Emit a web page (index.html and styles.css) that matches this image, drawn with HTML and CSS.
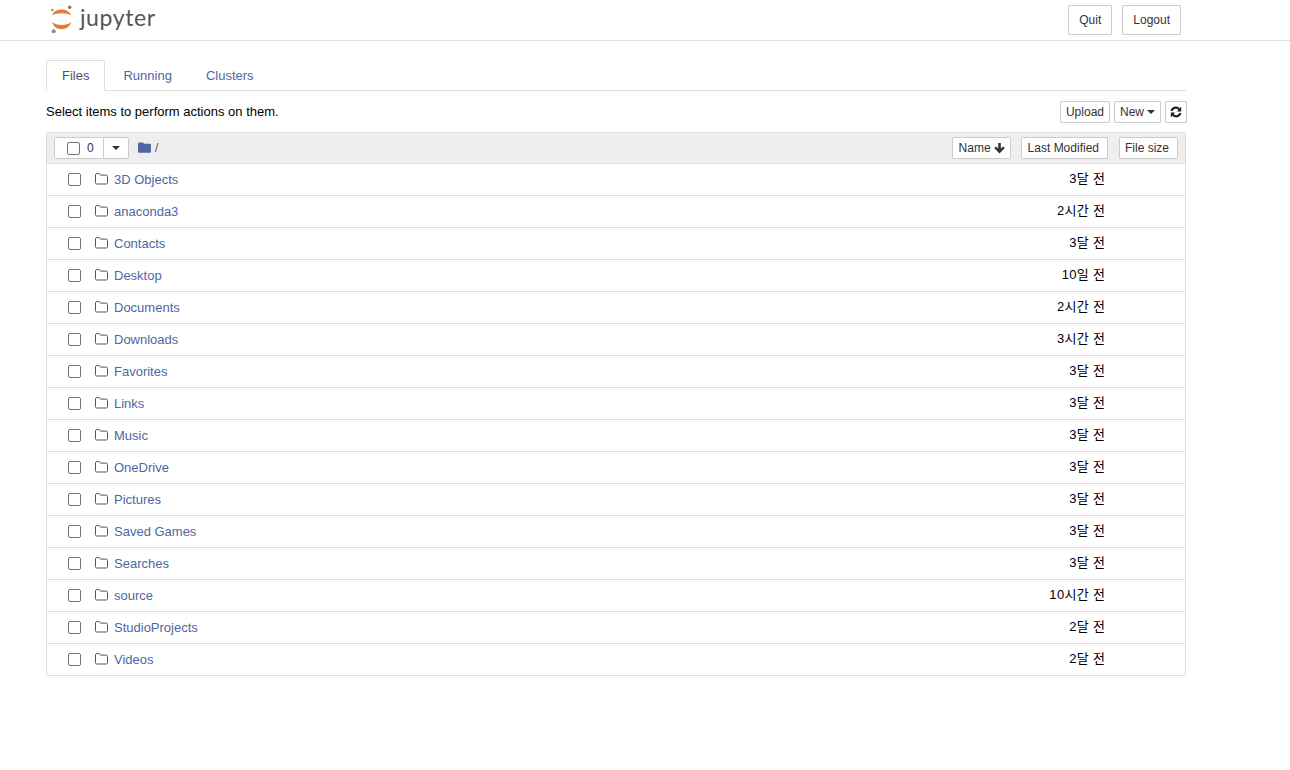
FILE: index.html
```html
<!DOCTYPE html>
<html lang="en">
<head>
<meta charset="utf-8">
<title>Home</title>
<link rel="stylesheet" href="styles.css">
</head>
<body>
<svg class="defs" width="0" height="0" aria-hidden="true">
  <symbol id="folder" viewBox="0 0 13 12"><path d="M.5 9.8V1.7C.5 1.1 1 .6 1.6.6H4.2C4.8.6 5.2 1 5.5 2.1H11.3C12 2.1 12.5 2.6 12.5 3.3V9.8C12.5 10.5 12 11 11.3 11H1.7C1 11 .5 10.5.5 9.8Z" fill="none" stroke="#555" stroke-width="1"/></symbol>
</svg>
<header class="header">
  <div class="header-inner">
    <a class="logo">
      <svg class="logo-mark" width="24" height="30" viewBox="0 0 24 30">
        <path d="M2 12.5C5 4.6 18 4.6 21.2 12.5C17.5 9.4 6 9.4 2 12.5Z" fill="#e07b39"/>
        <path d="M2 19C5 28.6 18 28.6 21.2 19C17.5 23 6 23 2 19Z" fill="#e07b39"/>
        <circle cx="19.7" cy="4.3" r="1.7" fill="#767677"/>
        <circle cx="2.3" cy="7" r="1.2" fill="#8a8a8a"/>
        <circle cx="3.7" cy="28.3" r="2" fill="#8a8a8a"/>
      </svg>
      <span class="logo-text">jupyter</span>
    </a>
    <div class="header-btns">
      <button class="btn btn-header">Quit</button>
      <button class="btn btn-header">Logout</button>
    </div>
  </div>
</header>
<main class="main">
  <nav class="tabs">
    <a class="tab active">Files</a>
    <a class="tab">Running</a>
    <a class="tab">Clusters</a>
  </nav>
  <div class="toolbar">
    <span class="hint">Select items to perform actions on them.</span>
    <div class="toolbar-btns">
      <button class="btn btn-xs">Upload</button>
      <button class="btn btn-xs">New <i class="caret"></i></button>
      <button class="btn btn-xs btn-refresh" aria-label="Refresh">
        <svg width="12" height="12" viewBox="0 0 12 12"><path d="M.6 5C1 2.4 3.2.6 5.8.6C7.3.6 8.6 1.2 9.6 2.2L11.2.8V5.4H6.8L8.3 3.9C7.7 3.2 6.9 2.8 5.9 2.8C4.4 2.8 3.2 3.7 2.8 5H.6ZM11.4 7C11 9.6 8.8 11.4 6.2 11.4C4.7 11.4 3.4 10.8 2.4 9.8L.8 11.2V6.6H5.2L3.7 8.1C4.3 8.8 5.1 9.2 6.1 9.2C7.6 9.2 8.8 8.3 9.2 7H11.4Z" fill="#222"/></svg>
      </button>
    </div>
  </div>
  <section class="list">
    <div class="list-head">
      <div class="select-group">
        <label class="select-count"><input type="checkbox" class="check head-check"><span>0</span></label>
        <span class="select-drop"><i class="caret dark"></i></span>
      </div>
      <svg class="crumb-icon" width="13" height="11" viewBox="0 0 13 11"><path d="M0 2C0 1 .6.5 1.4.5H4.4C5.2.5 5.6 1 5.8 1.8H11.6C12.4 1.8 13 2.4 13 3.2V9.4C13 10.2 12.4 10.8 11.6 10.8H1.4C.6 10.8 0 10.2 0 9.4Z" fill="#4f66a4"/></svg>
      <span class="crumb-sep">/</span>
      <div class="sort-btns">
        <button class="btn btn-sort sort-name">Name
          <svg width="11" height="11" viewBox="0 0 11 11"><path d="M4.2 0H6.8V5.6L9.1 3.4L10.8 5.1L5.5 10.6L.2 5.1L1.9 3.4L4.2 5.6Z" fill="#333"/></svg>
        </button>
        <button class="btn btn-sort sort-mod">Last Modified</button>
        <button class="btn btn-sort sort-size">File size</button>
      </div>
    </div>
    <div class="row"><input type="checkbox" class="check"><svg class="folder"><use href="#folder"/></svg><a class="name">3D Objects</a><span class="time">3달 전</span></div>
    <div class="row"><input type="checkbox" class="check"><svg class="folder"><use href="#folder"/></svg><a class="name">anaconda3</a><span class="time">2시간 전</span></div>
    <div class="row"><input type="checkbox" class="check"><svg class="folder"><use href="#folder"/></svg><a class="name">Contacts</a><span class="time">3달 전</span></div>
    <div class="row"><input type="checkbox" class="check"><svg class="folder"><use href="#folder"/></svg><a class="name">Desktop</a><span class="time">10일 전</span></div>
    <div class="row"><input type="checkbox" class="check"><svg class="folder"><use href="#folder"/></svg><a class="name">Documents</a><span class="time">2시간 전</span></div>
    <div class="row"><input type="checkbox" class="check"><svg class="folder"><use href="#folder"/></svg><a class="name">Downloads</a><span class="time">3시간 전</span></div>
    <div class="row"><input type="checkbox" class="check"><svg class="folder"><use href="#folder"/></svg><a class="name">Favorites</a><span class="time">3달 전</span></div>
    <div class="row"><input type="checkbox" class="check"><svg class="folder"><use href="#folder"/></svg><a class="name">Links</a><span class="time">3달 전</span></div>
    <div class="row"><input type="checkbox" class="check"><svg class="folder"><use href="#folder"/></svg><a class="name">Music</a><span class="time">3달 전</span></div>
    <div class="row"><input type="checkbox" class="check"><svg class="folder"><use href="#folder"/></svg><a class="name">OneDrive</a><span class="time">3달 전</span></div>
    <div class="row"><input type="checkbox" class="check"><svg class="folder"><use href="#folder"/></svg><a class="name">Pictures</a><span class="time">3달 전</span></div>
    <div class="row"><input type="checkbox" class="check"><svg class="folder"><use href="#folder"/></svg><a class="name">Saved Games</a><span class="time">3달 전</span></div>
    <div class="row"><input type="checkbox" class="check"><svg class="folder"><use href="#folder"/></svg><a class="name">Searches</a><span class="time">3달 전</span></div>
    <div class="row"><input type="checkbox" class="check"><svg class="folder"><use href="#folder"/></svg><a class="name">source</a><span class="time">10시간 전</span></div>
    <div class="row"><input type="checkbox" class="check"><svg class="folder"><use href="#folder"/></svg><a class="name">StudioProjects</a><span class="time">2달 전</span></div>
    <div class="row"><input type="checkbox" class="check"><svg class="folder"><use href="#folder"/></svg><a class="name">Videos</a><span class="time">2달 전</span></div>
  </section>
</main>
</body>
</html>
```

FILE: styles.css
```css
* { box-sizing: border-box; }
html, body { margin: 0; padding: 0; background: #fff; }
body {
  font-family: "Liberation Sans", "Noto Sans CJK KR", sans-serif;
  font-size: 13px;
  line-height: 18px;
  color: #000;
  overflow: hidden;
}
.defs { display: block; height: 0; }
.header { height: 41px; border-bottom: 1px solid #e0e0e0; }
.header-inner {
  width: 1135px;
  margin-left: 46px;
  display: flex;
  justify-content: space-between;
  align-items: flex-start;
}
.logo { display: flex; align-items: flex-start; padding: 3px 0 0 4px; }
.logo-mark { display: block; }
.logo-text {
  font-family: "Lato", sans-serif;
  font-size: 23px;
  line-height: 28px;
  letter-spacing: 0.6px;
  color: #555;
  margin-left: 6px;
}
.header-btns { display: flex; gap: 10px; padding-top: 5px; }
.btn {
  display: inline-flex;
  align-items: center;
  justify-content: center;
  background: #fff;
  border: 1px solid #ccc;
  border-radius: 1px;
  font: inherit;
  font-size: 12px;
  color: #333;
  padding: 0;
}
.btn-header { height: 30px; padding: 0 10px; }
.main { width: 1141px; margin-left: 46px; padding-top: 19px; }
.tabs { display: flex; width: 1140px; height: 31px; border-bottom: 1px solid #ddd; }
.tab {
  height: 31px;
  padding: 6px 15px;
  margin-right: 2px;
  border: 1px solid transparent;
  color: #4f66a4;
}
.tab.active {
  color: #555;
  border-color: #ddd;
  border-bottom-color: #fff;
  border-radius: 2px 2px 0 0;
}
.toolbar { display: flex; justify-content: space-between; align-items: flex-start; padding-top: 10px; height: 41px; }
.hint { line-height: 21px; }
.toolbar-btns { display: flex; gap: 4px; }
.btn-xs { height: 22px; padding: 0 5px; }
.btn-refresh { width: 22px; padding: 0; }
.caret {
  display: inline-block;
  width: 0;
  height: 0;
  margin-left: 3px;
  border-top: 4px solid #333;
  border-left: 4px solid transparent;
  border-right: 4px solid transparent;
}
.list { width: 1140px; border: 1px solid #ddd; border-radius: 2px 2px 0 0; }
.list-head {
  height: 30px;
  background: #eee;
  display: flex;
  align-items: center;
  padding: 0 7px;
}
.select-group { display: flex; height: 22px; background: #fff; border: 1px solid #ccc; border-radius: 2px; width: 75px; }
.select-count { display: flex; align-items: center; width: 49px; border-right: 1px solid #ccc; padding-left: 12px; font-size: 12px; color: #333; }
.select-count span { margin-left: 7px; }
.select-drop { flex: 1; display: flex; align-items: center; justify-content: center; }
.caret.dark { margin: 0; }
.check {
  appearance: none;
  width: 13px;
  height: 13px;
  margin: 0;
  background: #fff;
  border: 1px solid #767676;
  border-radius: 2px;
  flex: none;
}
.crumb-icon { margin-left: 9px; margin-top: -2px; flex: none; }
.crumb-sep { margin-left: 4px; color: #555; font-size: 12px; }
.sort-btns { margin-left: auto; display: flex; }
.btn-sort { height: 22px; }
.sort-name { gap: 3px; margin-right: 10px; padding: 0 5px 0 6px; }
.sort-mod { margin-right: 11px; padding: 0 8px 0 6px; }
.sort-size { padding: 0 8px 0 5px; }
.row {
  height: 32px;
  border-top: 1px solid #ddd;
  display: flex;
  align-items: center;
  padding-left: 21px;
}
.folder { width: 13px; height: 12px; margin-left: 14px; margin-top: -1px; flex: none; }
.name { margin-left: 6px; color: #4f66a4; }
.time { margin-left: auto; margin-right: 79.6px; margin-top: -1px; letter-spacing: 0.35px; color: #000; }
```
